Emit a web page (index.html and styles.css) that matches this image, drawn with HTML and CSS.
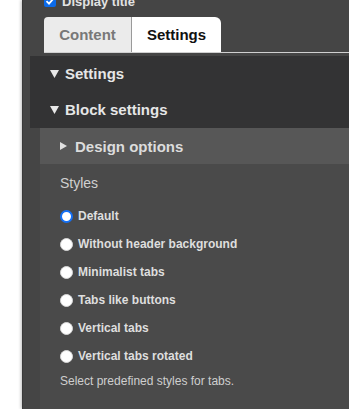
FILE: index.html
```html
<!DOCTYPE html>
<html>
<head>
<meta charset="utf-8">
<link rel="stylesheet" href="styles.css">
</head>
<body>
<div class="panel">
  <div class="check-row">
    <span class="checkbox"><svg width="12" height="12" viewBox="0 0 12 12"><path d="M2.5 6.2 L5 8.6 L9.6 3.4" fill="none" stroke="#fff" stroke-width="1.8"/></svg></span>
    <span class="check-label">Display title</span>
  </div>
  <div class="tabs">
    <div class="tab tab-content">Content</div>
    <div class="tab tab-settings">Settings</div>
  </div>
  <div class="dark-band">
    <div class="section-head"><svg class="tri-down" width="9" height="8" viewBox="0 0 9 8"><path d="M0 0 H9 L4.5 8 Z" fill="#e8e8e8"/></svg><span>Settings</span></div>
    <div class="section-head"><svg class="tri-down" width="9" height="8" viewBox="0 0 9 8"><path d="M0 0 H9 L4.5 8 Z" fill="#e8e8e8"/></svg><span>Block settings</span></div>
  </div>
  <div class="design-band">
    <svg class="tri-right" width="7" height="8" viewBox="0 0 7 8"><path d="M0 0 L7 4 L0 8 Z" fill="#e0e0e0"/></svg><span>Design options</span>
  </div>
  <div class="body">
    <div class="styles-label">Styles</div>
    <div class="options">
      <label class="option"><input type="radio" name="s" checked><span>Default</span></label>
      <label class="option"><input type="radio" name="s"><span>Without header background</span></label>
      <label class="option"><input type="radio" name="s"><span>Minimalist tabs</span></label>
      <label class="option"><input type="radio" name="s"><span>Tabs like buttons</span></label>
      <label class="option"><input type="radio" name="s"><span>Vertical tabs</span></label>
      <label class="option"><input type="radio" name="s"><span>Vertical tabs rotated</span></label>
    </div>
    <div class="desc">Select predefined styles for tabs.</div>
  </div>
</div>
</body>
</html>
```
FILE: styles.css
```css
html, body {
  margin: 0;
  padding: 0;
  background: #ffffff;
  height: 409px;
  overflow: hidden;
  font-family: "Liberation Sans", Arial, sans-serif;
}
.panel {
  margin-left: 22px;
  height: 409px;
  background: #454545;
  box-shadow: -1px 0 3px rgba(0,0,0,0.25);
  border-left: 1px solid #3a3a3a;
  display: flex;
  flex-direction: column;
}
.check-row {
  display: flex;
  align-items: center;
  gap: 6px;
  height: 18px;
  flex: none;
  margin-top: -8px;
  padding-left: 21px;
}
.checkbox {
  width: 12px;
  height: 12px;
  border-radius: 2px;
  background: #0b6bea;
  display: flex;
}
.check-label {
  color: #e2e2e2;
  font-weight: bold;
  font-size: 13px;
}
.tabs {
  display: flex;
  flex: none;
  margin-top: 7px;
  margin-left: 21px;
  border-bottom: 1px solid #d0d0d0;
}
.tab {
  height: 35px;
  display: flex;
  align-items: center;
  justify-content: center;
  font-size: 15px;
  font-weight: bold;
}
.tab-content {
  width: 87px;
  background: #ebebeb;
  color: #787878;
  border-top-left-radius: 4px;
  border-right: 1px solid #9a9a9a;
}
.tab-settings {
  width: 89px;
  background: #ffffff;
  color: #111111;
  border-top-right-radius: 6px;
}
.dark-band {
  flex: none;
  margin-top: 3px;
  margin-left: 7px;
  background: #333334;
}
.section-head {
  height: 36px;
  display: flex;
  align-items: center;
  padding-left: 20px;
  padding-bottom: 1px;
  box-sizing: border-box;
  gap: 6px;
  color: #e6e6e6;
  font-size: 15px;
  font-weight: bold;
}
.design-band {
  flex: none;
  margin-left: 17px;
  height: 36px;
  background: #575757;
  display: flex;
  align-items: center;
  padding-left: 20px;
  gap: 8px;
  color: #dcdcdc;
  font-size: 15px;
  font-weight: bold;
}
.body {
  flex: 1;
  margin-left: 17px;
  background: #4a4a4a;
  padding: 9px 0 0 20px;
}
.styles-label {
  color: #d0d0d0;
  font-size: 14px;
  line-height: 20px;
}
.options {
  margin-top: 9px;
  display: flex;
  flex-direction: column;
}
.option {
  height: 28px;
  display: flex;
  align-items: center;
  gap: 5px;
  color: #dedede;
  font-size: 12px;
  font-weight: bold;
}
.option input {
  appearance: none;
  -webkit-appearance: none;
  margin: 0;
  width: 13px;
  height: 13px;
  border-radius: 50%;
  background: #ffffff;
  border: 1px solid #d8d8d8;
}
.option input:checked {
  border: 2px solid #1470f5;
  background: #ffffff;
}
.desc {
  margin-top: 3px;
  color: #cfcfcf;
  font-size: 12px;
  line-height: 16px;
}
```
